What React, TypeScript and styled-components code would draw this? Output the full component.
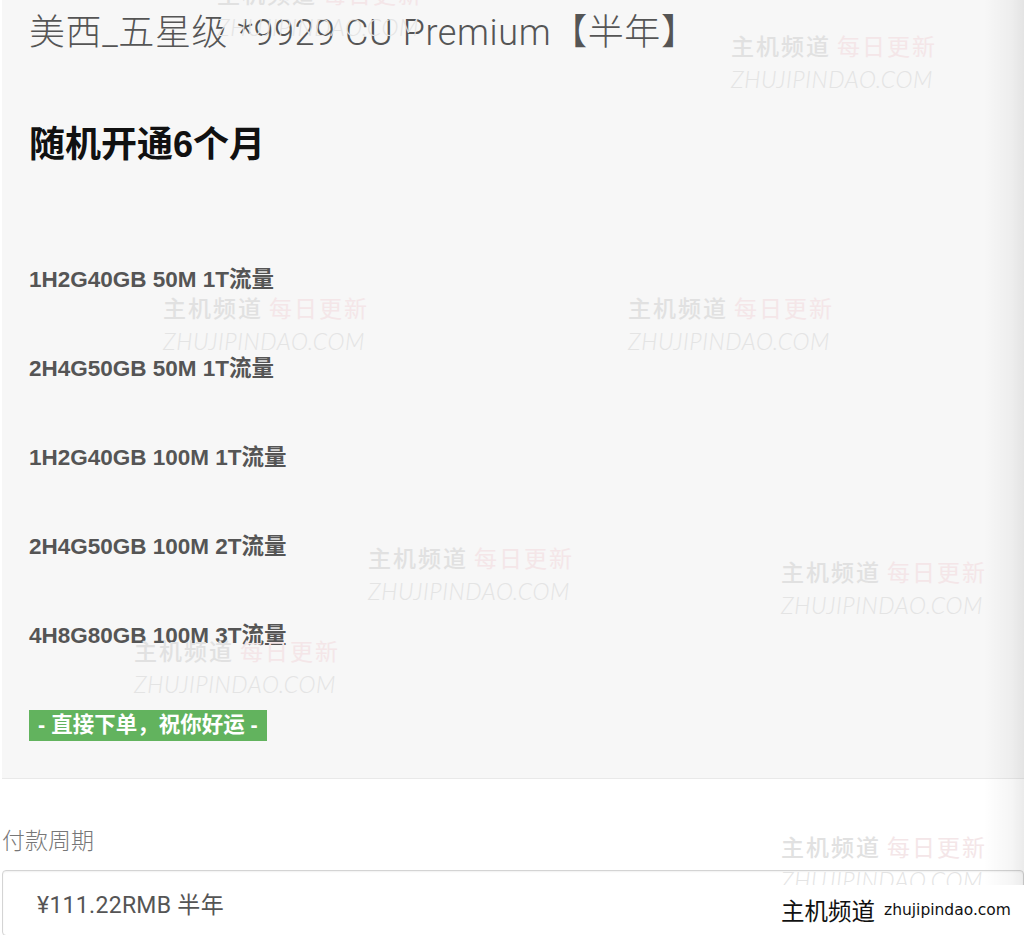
import styled, { createGlobalStyle } from 'styled-components';

const GlobalStyle = createGlobalStyle`
  html, body {
    margin: 0;
    padding: 0;
    background: #fff;
    overflow: hidden;
  }
  body {
    font-family: "Liberation Sans", "Noto Sans CJK SC", sans-serif;
  }
`;

const specs = [
  '1H2G40GB 50M 1T流量',
  '2H4G50GB 50M 1T流量',
  '1H2G40GB 100M 1T流量',
  '2H4G50GB 100M 2T流量',
  '4H8G80GB 100M 3T流量',
];

// watermark positions over the page
const marks = [
  { x: 217, y: -22 },
  { x: 731, y: 30 },
  { x: 163, y: 292 },
  { x: 628, y: 292 },
  { x: 368, y: 542 },
  { x: 781, y: 556 },
  { x: 134, y: 635 },
  { x: 781, y: 831 },
];

const Page = styled.div`
  position: relative;
  width: 1024px;
  height: 935px;
  overflow: hidden;
  background: #fff;
`;

const Panel = styled.section`
  margin-left: 2px;
  padding: 12px 27px 37px;
  background: #f7f7f7;
  border-bottom: 1px solid #e9e9e9;
`;

const Title = styled.h1`
  margin: 0;
  font-family: Roboto, "Noto Sans CJK SC", sans-serif;
  font-weight: 300;
  font-size: 36px;
  line-height: 42px;
  letter-spacing: 0.6px;
  color: #555;
  white-space: nowrap;
`;

const Heading = styled.h2`
  margin: 70px 0 0;
  font-family: "Liberation Sans", "Noto Sans CJK SC", sans-serif;
  font-weight: 700;
  font-size: 36px;
  line-height: 42px;
  color: #111;
`;

const SpecList = styled.ul`
  list-style: none;
  margin: 101px 0 0;
  padding: 0;
  display: flex;
  flex-direction: column;
  gap: 64px;
`;

const Spec = styled.li`
  font-family: "Liberation Sans", "Noto Sans CJK SC", sans-serif;
  font-weight: 700;
  font-size: 22.5px;
  line-height: 25px;
  color: #555;
`;

const Badge = styled.div`
  display: inline-block;
  margin-top: 62px;
  height: 31px;
  padding: 0 9px;
  background: #62b35e;
  color: #fff;
  font-family: "Liberation Sans", "Noto Sans CJK SC", sans-serif;
  font-weight: 700;
  font-size: 21.5px;
  line-height: 31px;
  vertical-align: top;
`;

const Field = styled.div`
  padding: 46px 0 0 2px;
`;

const Label = styled.div`
  font-family: "Noto Sans CJK SC", sans-serif;
  font-weight: 300;
  font-size: 23px;
  line-height: 28px;
  color: #777;
`;

const Select = styled.div`
  margin-top: 17px;
  height: 64px;
  padding-left: 34px;
  display: flex;
  align-items: center;
  border: 1px solid #d4d4d4;
  border-radius: 4px;
  box-shadow: inset 0 1px 2px rgba(0, 0, 0, 0.06);
  font-family: Roboto, "Noto Sans CJK SC", sans-serif;
  font-size: 23px;
  letter-spacing: 0.3px;
  color: #555;
`;

const Watermark = styled.div`
  position: absolute;
  pointer-events: none;
  white-space: nowrap;
`;

const MarkCn = styled.div`
  font-family: "Noto Sans CJK SC", sans-serif;
  font-weight: 500;
  font-size: 23px;
  line-height: 30px;
  letter-spacing: 2px;
  color: #e1e1e1;

  span {
    margin-left: 6px;
    font-weight: 400;
    color: #f4e6e8;
  }
`;

const MarkEn = styled.div`
  margin-top: 7px;
  font-family: Lato, "Open Sans", sans-serif;
  font-style: italic;
  font-weight: 300;
  font-size: 23px;
  line-height: 24px;
  letter-spacing: 0.6px;
  color: #e4e4e4;
`;

const EdgeShade = styled.div`
  position: absolute;
  top: 0;
  right: 0;
  width: 40px;
  height: 100%;
  background: linear-gradient(to right, rgba(0, 0, 0, 0), rgba(0, 0, 0, 0.04) 70%, rgba(0, 0, 0, 0.08));
  pointer-events: none;
`;

const Logo = styled.div`
  position: absolute;
  right: 0;
  bottom: 0;
  width: 259px;
  height: 50px;
  background: #fff;
  display: flex;
  align-items: center;
  gap: 9px;
  padding-left: 16px;
  box-sizing: border-box;
`;

const LogoCn = styled.span`
  font-family: "Noto Sans CJK SC", sans-serif;
  font-size: 23.5px;
  color: #111;
`;

const LogoEn = styled.span`
  font-family: "DejaVu Sans", sans-serif;
  font-size: 15.5px;
  color: #111;
`;

export default function App() {
  return (
    <Page>
      <GlobalStyle />
      <Panel>
        <Title>美西_五星级 *9929 CU Premium【半年】</Title>
        <Heading>随机开通6个月</Heading>
        <SpecList>
          {specs.map(s => (
            <Spec key={s}>{s}</Spec>
          ))}
        </SpecList>
        <Badge>- 直接下单，祝你好运 -</Badge>
      </Panel>

      <Field>
        <Label>付款周期</Label>
        <Select>¥111.22RMB 半年</Select>
      </Field>

      {marks.map((m, i) => (
        <Watermark key={i} style={{ left: m.x, top: m.y }}>
          <MarkCn>主机频道<span>每日更新</span></MarkCn>
          <MarkEn>ZHUJIPINDAO.COM</MarkEn>
        </Watermark>
      ))}

      <EdgeShade />
      <Logo>
        <LogoCn>主机频道</LogoCn>
        <LogoEn>zhujipindao.com</LogoEn>
      </Logo>
    </Page>
  );
}
